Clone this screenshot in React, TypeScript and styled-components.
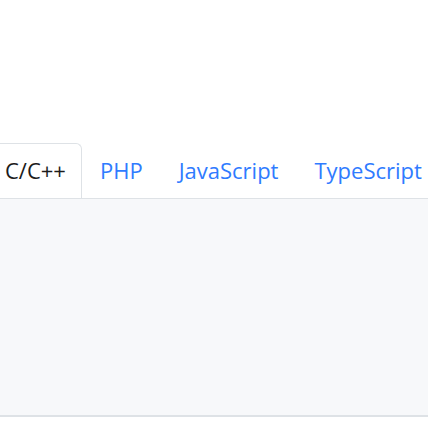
import styled, { createGlobalStyle } from 'styled-components';

const GlobalStyle = createGlobalStyle`
  html, body {
    margin: 0;
    padding: 0;
    background: #ffffff;
  }
  body {
    font-family: "Open Sans", "Noto Sans", sans-serif;
    overflow: hidden;
  }
`;

const Page = styled.div`
  width: 428px;
  height: 438px;
  padding-top: 143px;
  box-sizing: border-box;
  overflow: hidden;
`;

const TabBar = styled.ul`
  display: flex;
  list-style: none;
  margin: 0 0 0 -13px;
  padding: 0;
  white-space: nowrap;
`;

const Tab = styled.li<{ $active?: boolean }>`
  flex-shrink: 0;
  padding: 11px ${(p) => (p.$active ? '15px' : '17px')} 13px 17px;
  font-size: 22px;
  line-height: 30px;
  border: 1px solid ${(p) => (p.$active ? '#dee2e6' : 'transparent')};
  border-bottom: none;
  border-radius: 6px 6px 0 0;
  background: ${(p) => (p.$active ? '#ffffff' : 'transparent')};
  color: ${(p) => (p.$active ? '#1b1b1b' : '#2f7bff')};
  cursor: pointer;
`;

const Panel = styled.div`
  height: 216px;
  background: #f7f8fa;
  border-top: 1px solid #dee2e6;
  border-bottom: 2px solid #dee2e6;
`;

const tabs = ['C/C++', 'PHP', 'JavaScript', 'TypeScript'];

export default function App() {
  return (
    <>
      <GlobalStyle />
      <Page>
        <TabBar>
          {tabs.map((t, i) => (
            <Tab key={t} $active={i === 0}>
              {t}
            </Tab>
          ))}
        </TabBar>
        <Panel />
      </Page>
    </>
  );
}
